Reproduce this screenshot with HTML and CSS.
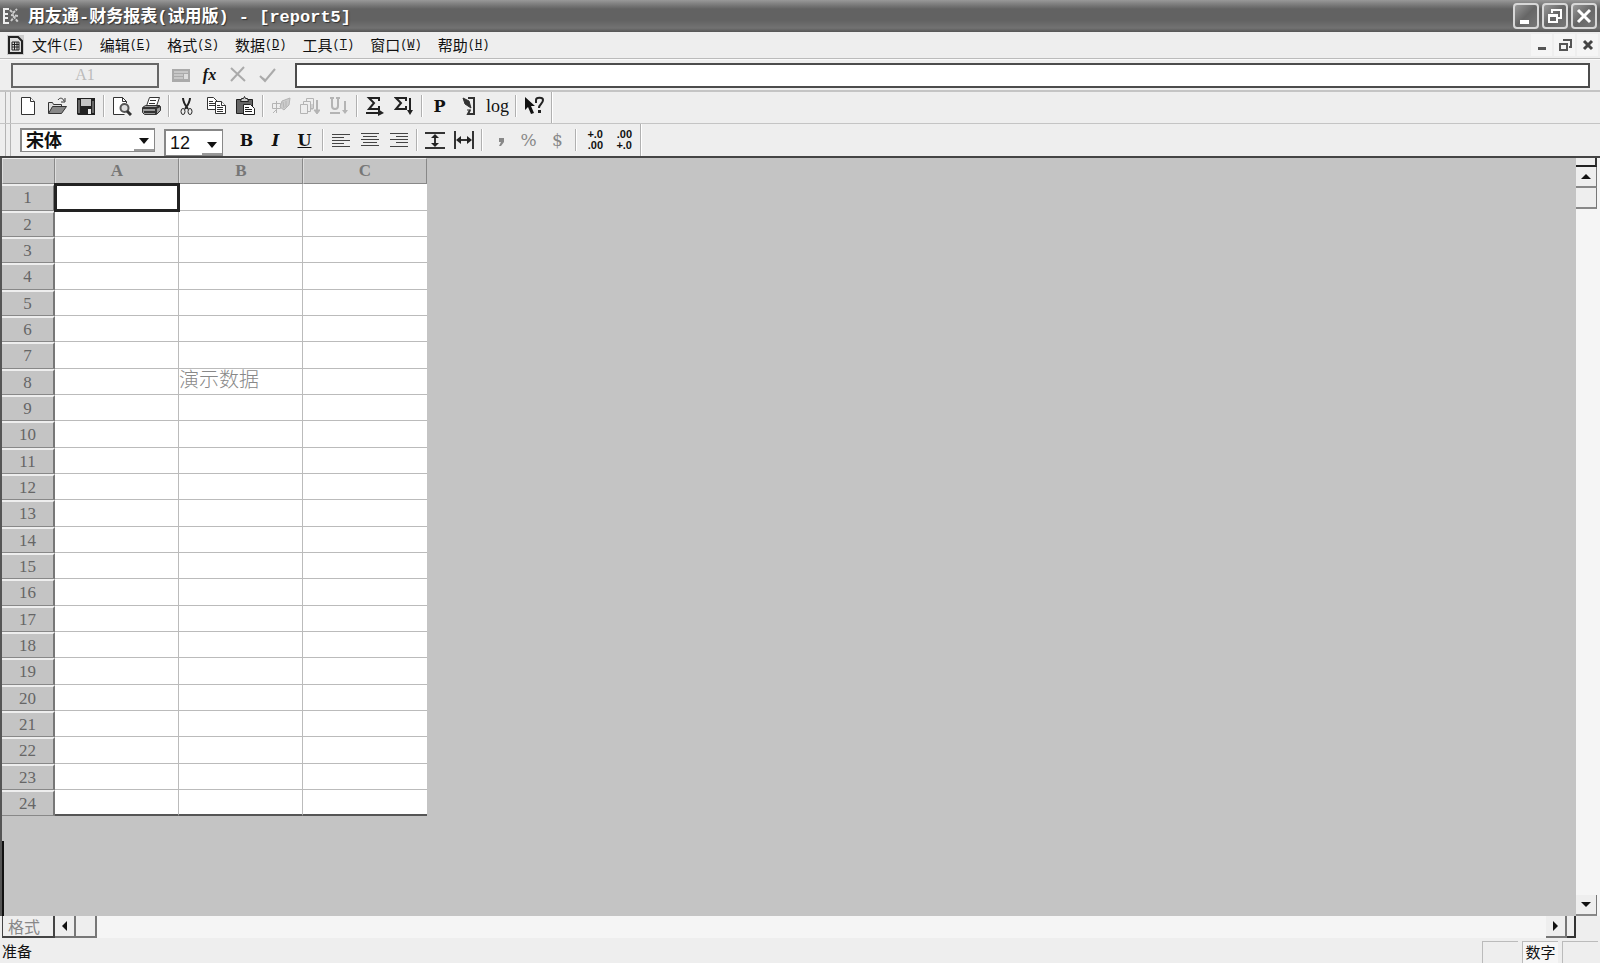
FILE: index.html
```
<!DOCTYPE html>
<html lang="zh-CN">
<head>
    <meta charset="UTF-8">
    <meta name="viewport" content="width=device-width, initial-scale=1.0">
    <title>用友通-财务报表(试用版) - [report5]</title>
    <link rel="stylesheet" href="styles.css">
</head>
<body>
    <header class="title-bar">
        <svg class="app-icon" width="20" height="20" viewBox="0 0 20 20" fill="none" stroke="#eee" stroke-width="2">
            <path d="M8 3H3v14h5M3 8h4M3 12h4"/>
            <path d="M9 4l3 3 4-4M10 9l7 1M10 15l3-4 4 5" stroke="#ccc" stroke-dasharray="3 1"/>
        </svg>
        <h1>用友通<span>-</span>财务报表<span>(</span>试用版<span>) - [report5]</span></h1>
        <div class="window-buttons">
            <button aria-label="最小化"><svg width="22" height="22" viewBox="0 0 22 22"><path d="M5 15h9v4H5z" fill="#fff"/></svg></button>
            <button aria-label="还原"><svg width="22" height="22" viewBox="0 0 22 22" fill="none" stroke="#fff" stroke-width="2"><path d="M8 8V5h9v8h-3M5 10h8v7H5zM5 11h8"/></svg></button>
            <button aria-label="关闭"><svg width="22" height="22" viewBox="0 0 22 22" fill="none" stroke="#fff" stroke-width="3"><path d="M5 5l12 12M17 5L5 17"/></svg></button>
        </div>
    </header>

    <nav class="menu-bar">
        <svg class="doc-icon" width="17" height="20" viewBox="0 0 17 20" fill="none" stroke="#222">
            <path d="M2 2h9l4 4v12H2z" fill="#ddd" stroke-width="2"/>
            <path d="M5 7h7v8H5zM5 9.500h7M5 12h7M7.500 7v8M10 7v8" stroke-width="1"/>
        </svg>
        <a href="#">文件<span>(<u>F</u>)</span></a>
        <a href="#">编辑<span>(<u>E</u>)</span></a>
        <a href="#">格式<span>(<u>S</u>)</span></a>
        <a href="#">数据<span>(<u>D</u>)</span></a>
        <a href="#">工具<span>(<u>T</u>)</span></a>
        <a href="#">窗口<span>(<u>W</u>)</span></a>
        <a href="#">帮助<span>(<u>H</u>)</span></a>
        <div class="child-buttons">
            <button aria-label="最小化窗口"><svg width="14" height="14" viewBox="0 0 14 14"><path d="M3 9h8v3H3z" fill="#555"/></svg></button>
            <button aria-label="还原窗口"><svg width="14" height="14" viewBox="0 0 14 14" fill="none" stroke="#555" stroke-width="2"><path d="M5 2h8v7h-2M2 6h7v6H2z"/></svg></button>
            <button aria-label="关闭窗口"><svg width="14" height="14" viewBox="0 0 14 14" fill="none" stroke="#444" stroke-width="3"><path d="M3 3l8 8M11 3l-8 8"/></svg></button>
        </div>
    </nav>

    <div class="formula-bar">
        <input class="cell-name" type="text" value="A1" aria-label="单元格" readonly>
        <div class="formula-buttons">
            <button class="tool" aria-label="函数面板"><svg width="20" height="20" viewBox="0 0 20 20"><path d="M1 4h18v13H1z" fill="#aaa"/><path d="M3 7h14M3 10h9M3 13h9" stroke="#e4e4e4" stroke-width="1" fill="none"/><path d="M13 9h4v5h-4z" fill="#ddd"/></svg></button>
            <button class="tool fx" aria-label="函数">fx</button>
            <button class="tool" aria-label="取消"><svg width="20" height="20" viewBox="0 0 20 20" fill="none" stroke="#aaa" stroke-width="2"><path d="M2 3l14 13M15 2L2 16"/></svg></button>
            <button class="tool" aria-label="确认"><svg width="20" height="20" viewBox="0 0 20 20" fill="none" stroke="#aaa" stroke-width="2"><path d="M2 11l5 5L17 4M3 12l4 3"/></svg></button>
        </div>
        <input class="formula" type="text" aria-label="公式">
    </div>

    <div class="toolbar">
        <button class="tool" aria-label="新建"><svg width="20" height="20" viewBox="0 0 20 20" fill="#fff" stroke="#333" stroke-width="1"><path d="M3.500 1.500h9l4 4v13h-13z"/><path d="M12.500 1.500v4h4"/></svg></button>
        <button class="tool" aria-label="打开"><svg width="20" height="20" viewBox="0 0 20 20" stroke="#333" stroke-width="1"><path d="M1.500 17V6.500h4l1 2h8V11" fill="#ddd"/><path d="M1.500 17.500l4-7h14l-5 7z" fill="#888"/><path d="M11 4c2-3 5-2 6 1M18 2v4h-4" fill="none"/></svg></button>
        <button class="tool" aria-label="保存"><svg width="20" height="20" viewBox="0 0 20 20"><path d="M1 2h18v17H2l-1-1z" fill="#222"/><path d="M5 3h10v7H5z" fill="#c4c4c4"/><path d="M2 4h2v13H2zM16 5h2v12h-2z" fill="#666"/><path d="M12 13h3v5h-3z" fill="#eee"/></svg></button>
        <i class="separator"></i>
        <button class="tool" aria-label="打印预览"><svg width="20" height="20" viewBox="0 0 20 20" fill="none" stroke="#333" stroke-width="1"><path d="M14.500 7V5.500l-4-4h-9v17h11" fill="#fff"/><path d="M10.500 1.500v4h4"/><circle cx="12.500" cy="12" r="4" fill="#ddd" stroke="#555" stroke-width="2"/><path d="M15 15l4 4" stroke-width="3"/></svg></button>
        <button class="tool" aria-label="打印"><svg width="20" height="20" viewBox="0 0 20 20" stroke="#333" stroke-width="1"><path d="M5.500 10l3-8.500h10l-3 8.500z" fill="#fff"/><path d="M9 4.500h6M8 7.500h6" fill="none" stroke-width="1"/><path d="M1.500 11.500l3-2h14l1 1v4l-4 4h-12l-2-2z" fill="#999"/><path d="M2 12h13M3 16h12M15 18v-6l4-2" fill="none" stroke-width="2"/></svg></button>
        <i class="separator"></i>
        <button class="tool" aria-label="剪切"><svg width="20" height="20" viewBox="0 0 20 20" fill="none" stroke="#222" stroke-width="2"><path d="M6 2c0 4 2 7 5 11M13 2c0 4-2 7-5 11"/><ellipse cx="6" cy="15.500" rx="2" ry="3" stroke-width="1"/><ellipse cx="13" cy="15.500" rx="2" ry="3" stroke-width="1"/></svg></button>
        <button class="tool" aria-label="复制"><svg width="20" height="20" viewBox="0 0 20 20" fill="#fff" stroke="#333" stroke-width="1"><path d="M1.500 1.500h6l4 4v8h-10z"/><path d="M3 5.500h4M3 7.500h6M3 9.500h6"/><path d="M9.500 5.500h6l4 4v8h-10z"/><path d="M15.500 5.500v4h4M11 9.500h3M11 11.500h6M11 13.500h6M11 15.500h6"/></svg></button>
        <button class="tool" aria-label="粘贴"><svg width="20" height="20" viewBox="0 0 20 20" stroke="#222" stroke-width="1"><path d="M1.500 3.500h16v14h-16z" fill="#666"/><path d="M5.500 5.500l1-3h2l1-2 1 2h2l1 3z" fill="#ccc"/><path d="M8.500 8.500h7l4 4v6h-11z" fill="#fff"/><path d="M10 11.500h4M10 13.500h7M10 15.500h7" fill="none"/></svg></button>
        <i class="separator"></i>
        <button class="tool" aria-label="格式刷"><svg width="20" height="20" viewBox="0 0 20 20" fill="none" stroke="#b4b4b4" stroke-width="1"><path d="M1.500 7.500h8v5h-8zM5.500 5v12M2 17l3-3"/><path d="M19 2l-8 3-2 6 4 3 5-5zM12 6l1 6M15 5v6" fill="#ccc"/></svg></button>
        <button class="tool" aria-label="向下填充"><svg width="20" height="20" viewBox="0 0 20 20" fill="#eee" stroke="#b4b4b4" stroke-width="1"><path d="M6.500 2.500h7v10h-7z"/><path d="M3.500 5.500h7v10h-7z"/><path d="M.500 8.500h7v9h-7zM12 14V8"/><path d="M17 4v11" stroke-width="2"/><path d="M14 14h6l-3 4z" fill="#b4b4b4"/></svg></button>
        <button class="tool" aria-label="下划"><svg width="20" height="20" viewBox="0 0 20 20" fill="none" stroke="#b4b4b4" stroke-width="2"><path d="M3 2v8c0 4 6 4 6 0V2M1 2h4M7 2h4M1 17h10M16 5v11"/><path d="M13 14h6l-3 4z" fill="#b4b4b4" stroke="none"/></svg></button>
        <i class="separator"></i>
        <button class="tool" aria-label="横向求和"><svg width="20" height="20" viewBox="0 0 20 20" fill="none" stroke="#222" stroke-width="2"><path d="M14 5V2H4l5 5-5 6h10v-3M1 17h14"/><path d="M13 13l6 4-6 3z" fill="#222" stroke="none"/></svg></button>
        <button class="tool" aria-label="纵向求和"><svg width="20" height="20" viewBox="0 0 20 20" fill="none" stroke="#222" stroke-width="2"><path d="M12 5V2H2l5 5-5 6h10v-3M16 2v14"/><path d="M13 14h6l-3 5z" fill="#222" stroke="none"/></svg></button>
        <i class="separator"></i>
        <button class="tool letter">P</button>
        <button class="tool" aria-label="编辑公式"><svg width="20" height="20" viewBox="0 0 20 20" fill="none" stroke="#333" stroke-width="2"><path d="M9 2h6v16H9l2-4"/><path d="M4 2l6 3 2 7-6-4z" fill="#333" stroke-width="1"/><path d="M8 14h4" stroke-width="1"/></svg></button>
        <button class="tool log">log</button>
        <i class="separator"></i>
        <button class="tool" aria-label="帮助"><svg width="22" height="20" viewBox="0 0 22 20"><path d="M2 1l10 9H8l3 7-3 1-3-7-3 3z" fill="#111"/><path d="M13 7V4c0-3 7-3 7 0 0 4-4 4-4 8" fill="none" stroke="#222" stroke-width="2"/><path d="M15 14h3v3h-3z" fill="#222"/></svg></button>
        <i class="separator end"></i>
    </div>

    <div class="toolbar format-bar">
        <div class="combo font-name">
            <select aria-label="字体"><option>宋体</option></select>
        </div>
        <div class="combo font-size">
            <select aria-label="字号"><option>12</option></select>
        </div>
        <button class="tool letter">B</button>
        <button class="tool letter"><em>I</em></button>
        <button class="tool letter"><u>U</u></button>
        <i class="separator"></i>
        <button class="tool" aria-label="左对齐"><svg width="20" height="20" viewBox="0 0 20 20" stroke="#444" stroke-width="1"><path d="M1 4.500h18M1 7.500h12M1 10.500h18M1 13.500h12M1 16.500h18"/></svg></button>
        <button class="tool" aria-label="居中"><svg width="20" height="20" viewBox="0 0 20 20" stroke="#444" stroke-width="1"><path d="M1 3.500h18M3 6.500h14M1 9.500h18M3 12.500h14M1 15.500h18"/></svg></button>
        <button class="tool" aria-label="右对齐"><svg width="20" height="20" viewBox="0 0 20 20" stroke="#444" stroke-width="1"><path d="M1 3.500h18M7 6.500h12M1 9.500h18M7 12.500h12M1 16.500h18"/></svg></button>
        <i class="separator"></i>
        <button class="tool" aria-label="行高"><svg width="20" height="20" viewBox="0 0 20 20"><path d="M0 3h20M0 18h20M10 6v10" stroke="#333" stroke-width="2"/><path d="M6 8l4-4 4 4zM6 13l4 4 4-4z" fill="#222"/></svg></button>
        <button class="tool" aria-label="列宽"><svg width="20" height="20" viewBox="0 0 20 20"><path d="M1 1v18M19 1v18M4 10h12" stroke="#333" stroke-width="2"/><path d="M7 6l-5 4 5 4zM13 6l5 4-5 4z" fill="#222"/></svg></button>
        <i class="separator"></i>
        <button class="tool symbol" aria-label="千分位"><svg width="20" height="20" viewBox="0 0 20 20" fill="#888"><path d="M9 8h5v4l-3 4H9l2-4H9z"/></svg></button>
        <button class="tool symbol">%</button>
        <button class="tool symbol">$</button>
        <i class="separator"></i>
        <button class="tool decimal"><span>+.0</span><span>.00</span></button>
        <button class="tool decimal"><span>.00</span><span>+.0</span></button>
        <i class="separator end"></i>
    </div>

    <main class="workspace">
        <div class="sheet">
            <table>
                <thead>
                    <tr><th></th><th>A</th><th>B</th><th>C</th></tr>
                </thead>
                <tbody>
                    <tr><th>1</th><td class="active"></td><td></td><td></td></tr>
                    <tr><th>2</th><td></td><td></td><td></td></tr>
                    <tr><th>3</th><td></td><td></td><td></td></tr>
                    <tr><th>4</th><td></td><td></td><td></td></tr>
                    <tr><th>5</th><td></td><td></td><td></td></tr>
                    <tr><th>6</th><td></td><td></td><td></td></tr>
                    <tr><th>7</th><td></td><td></td><td></td></tr>
                    <tr><th>8</th><td></td><td class="demo">演示数据</td><td></td></tr>
                    <tr><th>9</th><td></td><td></td><td></td></tr>
                    <tr><th>10</th><td></td><td></td><td></td></tr>
                    <tr><th>11</th><td></td><td></td><td></td></tr>
                    <tr><th>12</th><td></td><td></td><td></td></tr>
                    <tr><th>13</th><td></td><td></td><td></td></tr>
                    <tr><th>14</th><td></td><td></td><td></td></tr>
                    <tr><th>15</th><td></td><td></td><td></td></tr>
                    <tr><th>16</th><td></td><td></td><td></td></tr>
                    <tr><th>17</th><td></td><td></td><td></td></tr>
                    <tr><th>18</th><td></td><td></td><td></td></tr>
                    <tr><th>19</th><td></td><td></td><td></td></tr>
                    <tr><th>20</th><td></td><td></td><td></td></tr>
                    <tr><th>21</th><td></td><td></td><td></td></tr>
                    <tr><th>22</th><td></td><td></td><td></td></tr>
                    <tr><th>23</th><td></td><td></td><td></td></tr>
                    <tr><th>24</th><td></td><td></td><td></td></tr>
                </tbody>
            </table>
        </div>
        <div class="scroll-v">
            <div class="split"></div>
            <button class="up" aria-label="向上滚动"></button>
            <div class="thumb"></div>
            <button class="down" aria-label="向下滚动"></button>
        </div>
    </main>

    <div class="scroll-h">
        <button class="tab">格式</button>
        <button class="left" aria-label="向左滚动"></button>
        <div class="thumb"></div>
        <button class="right" aria-label="向右滚动"></button>
        <div class="split"></div>
    </div>

    <footer class="status-bar">
        <p>准备</p>
        <div class="panel"></div>
        <div class="panel num">数字</div>
        <div class="panel"></div>
    </footer>
</body>
</html>
```
FILE: styles.css
```
* {
    box-sizing: border-box;
}

body {
    margin: 0;
    height: 100vh;
    display: flex;
    flex-direction: column;
    background-color: #eeeeee;
    color: #111;
    font-family: "Liberation Sans", "Noto Sans CJK SC", sans-serif;
    font-size: 15px;
    overflow: hidden;
}

button {
    border: 0;
    padding: 0;
    background: none;
    color: inherit;
    font-family: inherit;
}

svg {
    display: block;
}

/* Title bar */
.title-bar {
    height: 32px;
    flex: none;
    display: flex;
    align-items: center;
    padding: 0 3px 0 1px;
    background: linear-gradient(#999 0, #858585 3px, #626262 9px, #626262 20px, #727272 28px, #555 32px);
    color: white;
}

h1 {
    flex: 1;
    margin: 0 0 0 7px;
    font-family: "Noto Sans CJK SC", sans-serif;
    font-size: 17px;
    line-height: 28px;
    font-weight: bold;
    text-shadow: 1px 1px 1px #333;
}

h1 span {
    font-family: "Liberation Mono", monospace;
    white-space: pre;
}

.window-buttons {
    display: flex;
    gap: 3px;
}

.window-buttons button {
    width: 26px;
    height: 26px;
    border: 2px solid #d8d8d8;
    border-radius: 4px;
    background: linear-gradient(135deg, #999, #666 50%, #777);
}

/* Menu bar */
.menu-bar {
    height: 27px;
    flex: none;
    display: flex;
    align-items: center;
    gap: 16px;
    padding-left: 7px;
    border-bottom: 1px solid #bbb;
}

.doc-icon {
    margin-right: -8px;
    background-color: #ccc;
}

.menu-bar a {
    display: flex;
    align-items: center;
    color: #111;
    text-decoration: none;
    font-family: "Noto Sans CJK SC", sans-serif;
    line-height: 20px;
}

.menu-bar a span {
    font-family: "Liberation Mono", monospace;
    font-size: 12px;
}

.child-buttons {
    margin-left: auto;
    display: flex;
    gap: 2px;
    padding: 0 2px;
}

.child-buttons button {
    width: 21px;
    height: 22px;
    display: flex;
    align-items: center;
    justify-content: center;
    background-color: #f5f5f5;
}

/* Formula bar */
.formula-bar {
    height: 33px;
    flex: none;
    display: flex;
    align-items: center;
    padding: 0 10px 0 11px;
    border-top: 1px solid #fafafa;
    border-bottom: 2px solid #c4c4c4;
}

.formula-bar input {
    height: 25px;
    border: 2px solid #4c4c4c;
    border-radius: 0;
    padding: 0 4px;
    font-size: 16px;
}

.formula-bar .cell-name {
    width: 148px;
    background-color: #eee;
    border-color: #666;
    color: #bbb;
    font-family: "Liberation Serif", serif;
    text-align: center;
}

.formula-buttons {
    display: flex;
    margin: 0 13px 0 7px;
}

.formula-bar .formula {
    flex: 1;
    background-color: white;
}

.tool {
    width: 29px;
    height: 24px;
    flex: none;
    display: flex;
    align-items: center;
    justify-content: center;
}

.fx {
    font-family: "Liberation Serif", serif;
    font-size: 16px;
    font-style: italic;
    font-weight: bold;
}

/* Toolbars */
.toolbar {
    height: 32px;
    flex: none;
    display: flex;
    align-items: center;
    padding: 0 0 3px 13px;
    border-bottom: 1px solid #c4c4c4;
    background: linear-gradient(90deg, #eee 5px, #b4b4b4 5px, #b4b4b4 6px, #eee 6px, #eee 10px, #b4b4b4 10px, #b4b4b4 11px, #eee 11px);
}

.separator {
    width: 7px;
    height: 22px;
    background: linear-gradient(90deg, transparent 3px, #b0b0b0 3px, #b0b0b0 4px, #fff 4px, #fff 5px, transparent 5px);
}

.separator.end {
    align-self: stretch;
    height: auto;
    margin-bottom: -3px;
}

.letter {
    font-family: "DejaVu Serif", serif;
    font-size: 16px;
    font-weight: bold;
}

.log {
    font-family: "Liberation Serif", serif;
    font-size: 18px;
}

.symbol {
    font-family: "DejaVu Serif", serif;
    font-size: 17px;
    color: #888;
}

.decimal {
    flex-direction: column;
    align-items: flex-end;
    padding-right: 5px;
    font-family: "Liberation Sans", sans-serif;
    font-size: 11px;
    font-weight: bold;
    line-height: 11px;
}

.format-bar {
    height: 34px;
    border-bottom: 2px solid #444;
    padding-left: 20px;
    padding-bottom: 0;
}

.format-bar .separator.end {
    margin-bottom: 0;
}

.combo {
    position: relative;
    border: 1px solid #888;
    border-width: 2px 1px 1px 2px;
    background: linear-gradient(#999, #999) right bottom / 20px 2px no-repeat white;
}

.combo select {
    width: 100%;
    height: 100%;
    border: 0;
    padding: 0 4px;
    appearance: none;
    background: transparent;
    color: #111;
    font-family: "Liberation Sans", "Noto Sans CJK SC", sans-serif;
    font-size: 18px;
}

/* drop-down arrow */
.combo::after {
    content: "";
    position: absolute;
    right: 5px;
    top: 8px;
    width: 10px;
    height: 6px;
    background-color: #111;
    clip-path: polygon(0 0, 100% 0, 50% 100%);
    pointer-events: none;
}

.font-name {
    width: 135px;
    height: 24px;
    margin-right: 9px;
}

.font-name select {
    font-weight: bold;
}

.font-size {
    width: 59px;
    height: 27px;
    margin-right: 9px;
    align-self: flex-end;
}

.font-size::after {
    top: 11px;
}

/* Sheet */
.workspace {
    flex: 1;
    min-height: 0;
    display: flex;
}

.sheet {
    position: relative;
    flex: 1;
    background-color: #c4c4c4;
    border-left: 2px solid #555;
    overflow: hidden;
}

.sheet::after {
    content: "";
    position: absolute;
    left: -1px;
    bottom: 0;
    width: 3px;
    height: 75px;
    background-color: #111;
}

table {
    width: 425px;
    table-layout: fixed;
    border-spacing: 0;
    font-family: "Liberation Serif", serif;
    font-size: 17px;
    line-height: 20px;
}

th {
    padding: 0;
    background-color: #c4c4c4;
    border: 1px solid #888;
    border-top-color: #eee;
    border-left-color: #ddd;
    color: #666;
    font-weight: normal;
}

th:first-child {
    width: 53px;
}

thead th {
    height: 26px;
    font-weight: bold;
    color: #777;
}

tbody th {
    border-top: 2px solid #eee;
    border-left: 0;
    border-right: 2px solid #777;
}

tbody tr {
    height: 26px;
}

tbody tr:nth-child(3n+1) {
    height: 27px;
}

td {
    padding: 0;
    background-color: white;
    border-right: 1px solid #bbb;
    border-bottom: 1px solid #bbb;
}

td:last-child {
    border-right: 0;
}

tbody tr:last-child td {
    border-bottom: 2px solid #555;
}

.active {
    outline: 3px solid #222;
    outline-offset: -2px;
}

.demo {
    vertical-align: top;
    color: #888;
    font-family: "Noto Sans CJK SC", sans-serif;
    font-size: 20px;
    font-weight: 300;
    white-space: nowrap;
}

/* Scroll bars */
.scroll-v {
    width: 24px;
    flex: none;
    display: flex;
    flex-direction: column;
    padding-right: 3px;
    background-color: #f5f5f5;
}

.scroll-v button,
.scroll-v .thumb {
    width: 21px;
    height: 21px;
    border-right: 1px solid #777;
    border-bottom: 2px solid #888;
    background-color: #eee;
}

.scroll-v .split {
    height: 9px;
    border-right: 2px solid #333;
    border-bottom: 2px solid #222;
    background-color: #eee;
}

.scroll-v .down {
    margin-top: auto;
}

.scroll-h {
    height: 22px;
    flex: none;
    display: flex;
    margin: 0 24px 0 2px;
    background-color: #f5f5f5;
}

.scroll-h > * {
    width: 21px;
    border-right: 2px solid #777;
    border-bottom: 2px solid #777;
    background-color: #eee;
}

.scroll-h .tab {
    width: 53px;
    border: 1px solid #444;
    border-top: 0;
    border-right-width: 2px;
    border-bottom-width: 2px;
    padding-left: 5px;
    color: #888;
    font-family: "Noto Sans CJK SC", sans-serif;
    font-size: 16px;
    line-height: 18px;
    text-align: left;
}

.scroll-h .right {
    margin-left: auto;
}

.scroll-h .split {
    width: 9px;
    border-color: #333;
}

.up, .down, .left, .right {
    display: flex;
    align-items: center;
    justify-content: center;
}

.up::before, .down::before, .left::before, .right::before {
    content: "";
    width: 10px;
    height: 5px;
    background-color: #111;
    clip-path: polygon(0 100%, 50% 0, 100% 100%);
}

.down::before {
    clip-path: polygon(0 0, 100% 0, 50% 100%);
}

.left::before, .right::before {
    width: 5px;
    height: 10px;
    clip-path: polygon(100% 0, 100% 100%, 0 50%);
}

.right::before {
    clip-path: polygon(0 0, 100% 50%, 0 100%);
}

/* Status bar */
.status-bar {
    height: 25px;
    flex: none;
    display: flex;
    gap: 4px;
    padding: 3px 2px 0;
    font-family: "Noto Sans CJK SC", sans-serif;
    line-height: 20px;
}

.status-bar p {
    flex: 1;
    margin: 0;
}

.panel {
    width: 36px;
    border-top: 1px solid #bbb;
    border-left: 1px solid #bbb;
    text-align: center;
}

.panel.num {
    background-color: #f6f6f6;
}
```
